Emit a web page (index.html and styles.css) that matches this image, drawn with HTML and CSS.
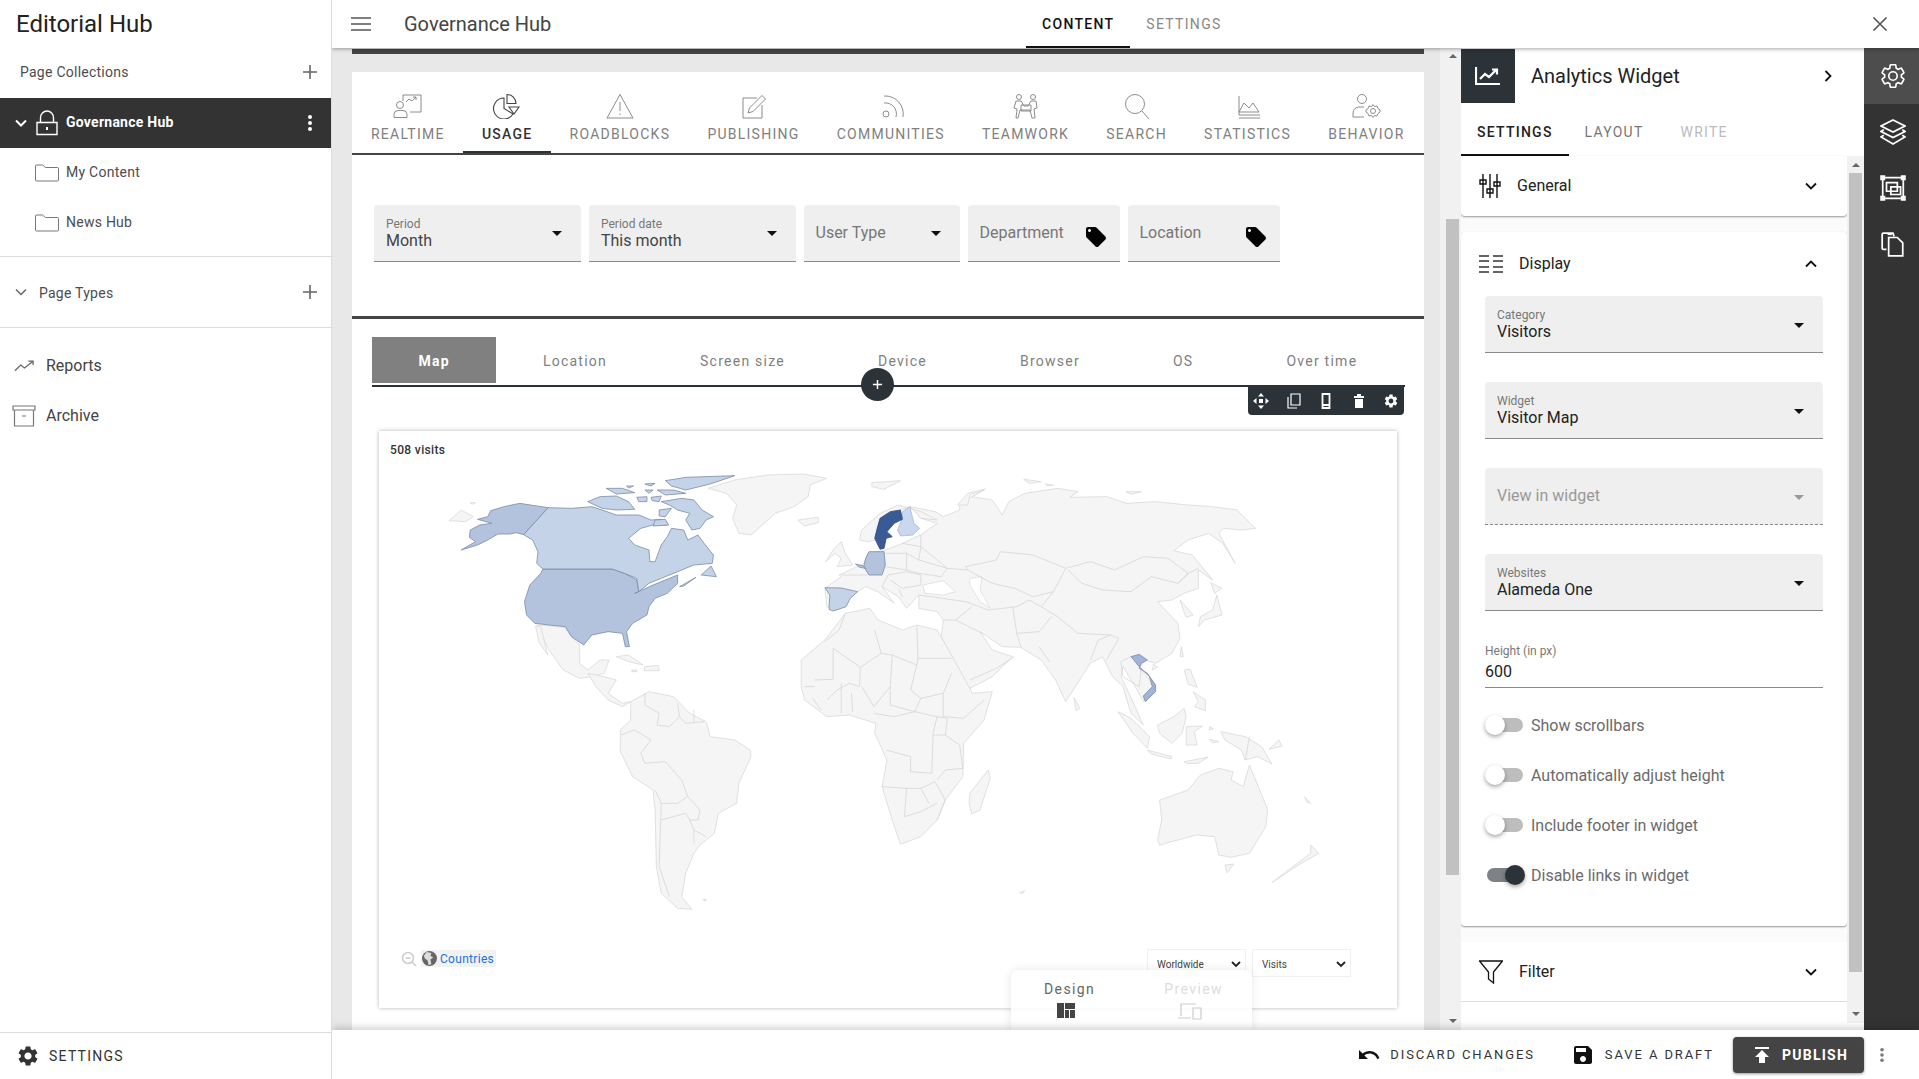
FILE: index.html
```html
<!DOCTYPE html>
<html lang="en">
<head>
<meta charset="utf-8">
<title>Governance Hub</title>
<link rel="stylesheet" href="styles.css">
</head>
<body>
<div class="app">
  <aside class="sidebar">
    <h1 class="brand">Editorial Hub</h1>
    <div class="side-head">
      <span>Page Collections</span>
      <svg class="plus" viewBox="0 0 16 16"><path d="M8 1v14M1 8h14"/></svg>
    </div>
    <div class="side-active">
      <svg class="chev-w" viewBox="0 0 12 8"><path d="M1 1.5l5 5 5-5"/></svg>
      <svg class="lock" viewBox="0 0 22 26"><path d="M1 12.500h20v12H1zM4.500 12.500V8a6.500 7 0 0 1 13 0v4.500"/><path class="lock-dot" d="M11 17v3"/></svg>
      <span class="side-active-label">Governance Hub</span>
      <svg class="kebab-w" viewBox="0 0 6 18"><circle cx="3" cy="3" r="2"/><circle cx="3" cy="9" r="2"/><circle cx="3" cy="15" r="2"/></svg>
    </div>
    <div class="side-item">
      <svg class="folder" viewBox="0 0 24 18"><path d="M.5 2a1 1 0 0 1 1-1h6l3 2.500h12a1 1 0 0 1 1 1V16a1 1 0 0 1-1 1h-21a1 1 0 0 1-1-1z"/></svg>
      <span>My Content</span>
    </div>
    <div class="side-item">
      <svg class="folder" viewBox="0 0 24 18"><path d="M.5 2a1 1 0 0 1 1-1h6l3 2.500h12a1 1 0 0 1 1 1V16a1 1 0 0 1-1 1h-21a1 1 0 0 1-1-1z"/></svg>
      <span>News Hub</span>
    </div>
    <div class="side-types">
      <svg class="chev-g" viewBox="0 0 12 8"><path d="M1 1.500l5 5 5-5"/></svg>
      <span>Page Types</span>
      <svg class="plus" viewBox="0 0 16 16"><path d="M8 1v14M1 8h14"/></svg>
    </div>
    <div class="side-link side-link-first">
      <svg class="trend" viewBox="0 0 22 12"><path d="M1 11l6-6 4 3 9-7M15 1h5v4"/></svg>
      <span>Reports</span>
    </div>
    <div class="side-link">
      <svg class="archive" viewBox="0 0 24 22"><path d="M1 1h22v4H1zM2.500 5v16h19V5M10 11h4"/></svg>
      <span>Archive</span>
    </div>
    <div class="side-foot">
      <svg class="foot-gear" viewBox="0 0 24 24"><path d="M19.140 12.940c.04-.3.06-.61.06-.94 0-.32-.02-.64-.07-.94l2.030-1.580c.18-.14.23-.41.12-.61l-1.920-3.320c-.12-.22-.37-.29-.59-.22l-2.390.96c-.5-.38-1.030-.7-1.620-.94l-.36-2.540c-.04-.24-.24-.41-.48-.41h-3.840c-.24 0-.43.17-.47.41l-.36 2.540c-.59.24-1.130.57-1.620.94l-2.390-.96c-.22-.08-.47 0-.59.22L2.740 8.870c-.12.21-.08.47.12.61l2.030 1.580c-.05.3-.09.63-.09.94s.02.64.07.94l-2.030 1.580c-.18.14-.23.41-.12.61l1.920 3.320c.12.22.37.29.59.22l2.390-.96c.5.38 1.030.7 1.620.94l.36 2.540c.05.24.24.41.48.41h3.840c.24 0 .44-.17.47-.41l.36-2.540c.59-.24 1.130-.56 1.620-.94l2.390.96c.22.08.47 0 .59-.22l1.920-3.320c.12-.22.07-.47-.12-.61l-2.010-1.580zM12 15.600c-1.980 0-3.600-1.620-3.600-3.600s1.620-3.600 3.600-3.600 3.600 1.620 3.600 3.600-1.620 3.600-3.600 3.600z"/></svg>
      <span>SETTINGS</span>
    </div>
  </aside>

  <div class="workspace">
    <header class="topbar">
      <svg class="burger" viewBox="0 0 20 14"><path d="M0 1h20M0 7h20M0 13h20"/></svg>
      <span class="top-title">Governance Hub</span>
      <nav class="top-tabs">
        <span class="top-tab top-tab-on">CONTENT</span>
        <span class="top-tab">SETTINGS</span>
      </nav>
      <svg class="close" viewBox="0 0 16 16"><path d="M1.500 1.500l13 13M14.500 1.500l-13 13"/></svg>
    </header>

    <div class="body">
      <main class="canvas">
        <div class="canvas-bar"></div>
        <section class="panel">
          <nav class="subtabs">
            <div class="subtab">
              <svg viewBox="0 0 30 26"><path d="M10 2h18v17H17M10 2v6"/><circle cx="7" cy="12" r="3.500"/><path d="M1 24.500v-3a4 4 0 0 1 4-4h5a4 4 0 0 1 4 4v3z"/><path d="M13 9l3-3 3 2 4-4M20 4h3v3"/></svg>
              <span>REALTIME</span>
            </div>
            <div class="subtab subtab-on">
              <svg viewBox="0 0 30 26"><path d="M12 5a10.500 10.500 0 1 0 9 16l-9-5.500z"/><path d="M15 1.500a9 9 0 0 1 9 9h-9z"/><path d="M17 14h10l-5 7z"/></svg>
              <span>USAGE</span>
            </div>
            <div class="subtab">
              <svg viewBox="0 0 30 26"><path d="M15 1.500L28 25H2zM15 9v9M15 20.500v1.500"/></svg>
              <span>ROADBLOCKS</span>
            </div>
            <div class="subtab">
              <svg viewBox="0 0 30 26"><path d="M19 5H5v20h19V12"/><path d="M10 20l1.500-5L24 2.500l3.500 3.500L15 18.500z"/></svg>
              <span>PUBLISHING</span>
            </div>
            <div class="subtab">
              <svg viewBox="0 0 30 26"><circle cx="10" cy="21" r="3"/><path d="M8 10a11 11 0 0 1 12 14M8 3a18 18 0 0 1 19 21"/></svg>
              <span>COMMUNITIES</span>
            </div>
            <div class="subtab">
              <svg viewBox="0 0 30 26"><circle cx="8" cy="4" r="2.500"/><circle cx="22" cy="4" r="2.500"/><path d="M5 8h5l3 5h4l3-5h5l1 7-3 1 1 9h-3l-2-8h-10l-2 8H5l1-9-3-1z"/><path d="M10 12h10v6H10z"/></svg>
              <span>TEAMWORK</span>
            </div>
            <div class="subtab">
              <svg viewBox="0 0 30 26"><circle cx="13" cy="11" r="9.500"/><path d="M20 18l7 8"/></svg>
              <span>SEARCH</span>
            </div>
            <div class="subtab">
              <svg viewBox="0 0 30 26"><path d="M6 3v19h21M6 25h21M6 19l5-9 5 5 4-5 6 9z"/></svg>
              <span>STATISTICS</span>
            </div>
            <div class="subtab">
              <svg viewBox="0 0 30 26"><circle cx="11" cy="6" r="4.500"/><path d="M2 24v-4a6 6 0 0 1 6-6h5"/><path d="M2 24h11"/><circle cx="22" cy="18" r="2.500"/><path d="M22 11.500l1.500 2 2.500-.5 1 2.500 2 1.500v2l-2 1.500-1 2.500-2.500-.5-1.500 2-1.500-2-2.500.5-1-2.500-2-1.500v-2l2-1.500 1-2.500 2.500.5z"/></svg>
              <span>BEHAVIOR</span>
            </div>
          </nav>

          <div class="filters">
            <div class="pfield pfield-1"><small>Period</small><b>Month</b><i class="caret"></i></div>
            <div class="pfield pfield-2"><small>Period date</small><b>This month</b><i class="caret"></i></div>
            <div class="pfield pfield-3 pfield-plain"><b>User Type</b><i class="caret"></i></div>
            <div class="pfield pfield-4 pfield-plain"><b>Department</b><svg class="tag" viewBox="0 0 24 24"><path d="M21.410 11.580l-9-9C12.050 2.220 11.550 2 11 2H4c-1.100 0-2 .9-2 2v7c0 .55.22 1.050.59 1.420l9 9c.36.36.86.58 1.410.58.55 0 1.050-.22 1.410-.59l7-7c.37-.36.59-.86.59-1.410 0-.55-.23-1.060-.59-1.420zM5.500 7C4.670 7 4 6.330 4 5.500S4.670 4 5.500 4 7 4.670 7 5.500 6.330 7 5.500 7z"/></svg></div>
            <div class="pfield pfield-4 pfield-plain"><b>Location</b><svg class="tag" viewBox="0 0 24 24"><path d="M21.410 11.580l-9-9C12.050 2.220 11.550 2 11 2H4c-1.100 0-2 .9-2 2v7c0 .55.22 1.050.59 1.420l9 9c.36.36.86.58 1.410.58.55 0 1.050-.22 1.410-.59l7-7c.37-.36.59-.86.59-1.410 0-.55-.23-1.060-.59-1.420zM5.500 7C4.670 7 4 6.330 4 5.500S4.670 4 5.500 4 7 4.670 7 5.500 6.330 7 5.500 7z"/></svg></div>
          </div>

          <div class="section-line"></div>

          <div class="widget">
            <div class="wtabs">
              <span class="wtab wtab-on">Map</span>
              <span class="wtab">Location</span>
              <span class="wtab">Screen size</span>
              <span class="wtab">Device</span>
              <span class="wtab">Browser</span>
              <span class="wtab">OS</span>
              <span class="wtab">Over time</span>
            </div>
            <span class="add-btn"><svg viewBox="0 0 12 12"><path d="M6 1v10M1 6h10"/></svg></span>
            <div class="toolbar">
              <svg viewBox="0 0 16 16"><path d="M8 0l3 3.500H5zM8 16l3-3.500H5zM0 8l3.500-3v6zM16 8l-3.500-3v6z"/><path d="M6 6h4v4H6z"/></svg>
              <svg viewBox="0 0 16 16" class="tb-line"><path d="M5 1h9v11H5zM2 4v11h9"/></svg>
              <svg viewBox="0 0 16 16" class="tb-line tb-thick"><path d="M4.500 1h7v14h-7zM4.500 12h7"/></svg>
              <svg viewBox="0 0 16 16"><path d="M3 3h10v2H3zM6 1h4v2H6zM4 6h8v9H4z"/></svg>
              <svg viewBox="0 0 24 24"><path d="M19.140 12.940c.04-.3.06-.61.06-.94 0-.32-.02-.64-.07-.94l2.030-1.580c.18-.14.23-.41.12-.61l-1.920-3.320c-.12-.22-.37-.29-.59-.22l-2.390.96c-.5-.38-1.030-.7-1.620-.94l-.36-2.540c-.04-.24-.24-.41-.48-.41h-3.840c-.24 0-.43.17-.47.41l-.36 2.540c-.59.24-1.130.57-1.620.94l-2.390-.96c-.22-.08-.47 0-.59.22L2.740 8.870c-.12.21-.08.47.12.61l2.030 1.580c-.05.3-.09.63-.09.94s.02.64.07.94l-2.030 1.580c-.18.14-.23.41-.12.61l1.920 3.320c.12.22.37.29.59.22l2.390-.96c.5.38 1.030.7 1.620.94l.36 2.540c.05.24.24.41.48.41h3.840c.24 0 .44-.17.47-.41l.36-2.540c.59-.24 1.130-.56 1.620-.94l2.390.96c.22.08.47 0 .59-.22l1.920-3.320c.12-.22.07-.47-.12-.61l-2.010-1.580zM12 15.600c-1.980 0-3.600-1.620-3.600-3.600s1.620-3.600 3.600-3.600 3.600 1.620 3.600 3.600-1.620 3.600-3.600 3.600z"/></svg>
            </div>

            <div class="map-card">
              <svg class="map" viewBox="-51.450 -87 2494 1731" preserveAspectRatio="none">
                <g class="land">
                  <path d="M120,182 L150,150 L180,170 L160,185 Z"/>
                  <path d="M172,128 L185,128 L178,133 Z"/>
                  <path d="M755,85 L820,60 L900,45 L990,42 L1045,55 L1005,75 L1000,110 L965,140 L920,160 L860,225 L830,220 L815,175 L825,135 L800,100 Z"/>
                  <path d="M975,180 L1025,172 L1025,188 L990,198 Z"/>
                  <path d="M335,495 L365,497 L405,503 L420,530 L440,555 L440,610 L460,630 L490,600 L512,600 L500,640 L470,650 L440,655 L400,630 L365,570 Z"/>
                  <path d="M332,498 L345,500 L362,585 L340,545 Z"/>
                  <path d="M460,640 L500,650 L530,660 L510,700 L545,730 L565,725 L545,740 L510,720 L480,680 Z"/>
                  <path d="M530,590 L560,585 L595,615 L560,605 Z"/>
                  <path d="M600,620 L632,616 L635,632 L598,632 Z"/>
                  <path d="M568,630 L580,630 L580,635 L568,635 Z"/>
                  <path d="M565,725 L610,695 L670,710 L710,760 L750,785 L760,830 L820,840 L858,870 L860,890 L830,970 L825,1030 L780,1060 L770,1120 L735,1155 L720,1180 L700,1240 L690,1310 L715,1348 L680,1345 L640,1300 L628,1220 L625,1050 L620,990 L570,950 L540,875 L540,810 L565,780 Z"/>
                  <path class="border" d="M600,700 L600,735 L635,760 L630,795 L660,800 L685,770 L680,730 M685,770 L700,790 L745,785 M720,750 L720,785 M540,825 L575,810 L615,840 L590,880 L600,910 L650,905 L690,960 L705,1010 L680,1030 L640,1030 L625,990 M705,1010 L735,1050 L730,1080 L710,1080 L720,1110 L720,1150 M640,1030 L635,1220 L660,1310 M640,1080 L700,1060 L710,1080 M720,1110 L750,1130"/>
                  <path d="M742,1318 L750,1318 L748,1324 Z"/>
                  <path d="M1518,1298 L1530,1292 L1526,1300 Z"/>
                </g>
                <g class="alt-world land">
                  <path d="M52,600 L110,540 L160,460 L220,445 L240,480 L300,510 L335,495 L385,510 L395,530 L465,680 L470,700 L520,695 L500,780 L450,850 L448,950 L405,1020 L385,1080 L345,1130 L295,1153 L275,1080 L250,980 L262,900 L232,820 L235,790 L170,765 L115,770 L60,720 L52,680 Z"/>
                  <path class="border" d="M130,565 L130,658 L85,660 M130,565 L197,622 L248,580 L275,585 L335,615 L338,595 L335,500 M232,510 L248,580 M160,460 L145,510 L110,545 M197,622 L195,680 L170,670 L140,690 L115,720 M275,585 L270,680 L230,740 L200,680 M338,595 L420,595 M335,615 L320,690 L345,715 L400,700 L420,640 M270,680 L270,735 L330,755 L345,715 M400,700 L400,770 L450,775 L500,720 M230,760 L280,770 L330,755 L385,770 L375,820 L372,940 L320,935 L320,890 L260,870 M385,770 L410,775 L405,825 L375,825 M405,825 L440,855 L448,925 L405,930 L385,960 M250,980 L310,985 L345,985 L380,965 L405,1020 L385,1080 M310,985 L305,1070 L345,1055 L385,1030 M345,985 L365,1030 M150,670 L150,760 M175,700 L178,755 M60,680 L85,680 M80,715 L100,750"/>
                  <path d="M465,1000 L510,930 L515,955 L490,1050 L470,1062 L463,1030 Z"/>
                  <path d="M110,385 L150,350 L145,345 L185,322 L205,310 L215,280 L255,272 L300,250 L330,232 L345,225 L385,190 L345,175 L320,140 L380,155 L400,170 L440,150 L440,130 L500,90 L470,110 L520,120 L545,165 L560,125 L600,100 L680,85 L730,95 L710,112 L800,110 L850,130 L920,125 L1000,135 L1060,140 L1120,150 L1165,205 L1130,210 L1085,205 L1075,220 L1115,310 L1085,250 L1050,220 L1000,240 L965,272 L1010,285 L1060,360 L1025,330 L1025,385 L990,400 L960,420 L925,425 L975,490 L980,535 L960,580 L920,610 L895,600 L880,625 L920,680 L890,725 L875,690 L840,620 L835,650 L855,700 L890,795 L860,760 L840,680 L815,650 L790,590 L760,610 L700,725 L675,660 L640,600 L590,562 L545,560 L520,540 L490,515 L520,570 L570,590 L520,650 L465,685 L395,530 L400,480 L385,455 L340,445 L340,405 L310,445 L290,410 L250,380 L280,430 L240,395 L210,380 L190,395 L135,452 L115,440 Z"/>
                  <path class="water" d="M350,375 L400,362 L430,395 L400,405 L355,400 Z"/>
                  <path class="water" d="M465,355 L495,350 L490,390 L515,445 L490,425 L465,375 Z"/>
                  <path d="M195,240 L200,210 L245,160 L290,135 L345,155 L385,180 L345,175 L320,140 L295,150 L245,180 L235,240 L215,245 Z"/>
                  <path d="M112,305 L130,270 L150,245 L160,280 L178,315 L140,320 L150,295 L135,280 Z"/>
                  <path d="M225,68 L295,62 L255,88 L225,80 Z"/>
                  <path d="M597,58 L640,65 L610,70 Z"/>
                  <path d="M650,72 L670,76 L655,78 Z"/>
                  <path d="M848,95 L885,95 L860,103 Z"/>
                  <path d="M435,135 L460,100 L503,87 L465,105 L460,135 Z"/>
                  <path d="M1055,368 L1082,385 L1065,400 Z"/>
                  <path d="M1025,500 L1030,470 L1060,450 L1070,405 L1083,465 L1040,480 Z"/>
                  <path d="M980,420 L1012,465 L995,472 L985,440 Z"/>
                  <path d="M983,560 L988,590 L980,590 Z"/>
                  <path d="M915,612 L925,622 L912,630 Z"/>
                  <path d="M990,630 L1005,628 L1022,682 L1000,672 Z"/>
                  <path d="M1012,695 L1042,720 L1042,752 L1015,740 L1025,725 Z"/>
                  <path d="M720,712 L735,745 L725,752 Z"/>
                  <path d="M828,755 L860,775 L905,830 L900,865 L865,820 Z"/>
                  <path d="M900,870 L960,890 L958,897 L910,882 Z"/>
                  <path d="M925,795 L965,770 L990,745 L995,770 L985,820 L960,850 L930,820 Z"/>
                  <path d="M995,800 L1035,798 L1015,815 L1022,855 L995,855 Z"/>
                  <path d="M1052,838 L1075,845 L1060,848 Z"/>
                  <path d="M990,905 L1048,892 L1025,910 L995,910 Z"/>
                  <path d="M1052,800 L1062,806 L1052,810 Z"/>
                  <path d="M1080,815 L1140,830 L1180,860 L1205,912 L1170,890 L1140,900 L1130,870 L1090,840 Z"/>
                  <path d="M1198,868 L1222,840 L1230,858 Z"/>
                  <path d="M1285,1010 L1300,1030 L1290,1025 Z"/>
                  <path d="M930,1020 L1000,990 L1030,945 L1075,925 L1110,935 L1105,960 L1135,980 L1150,915 L1195,1050 L1190,1100 L1150,1180 L1105,1192 L1075,1185 L1065,1130 L1020,1125 L930,1155 L925,1140 L935,1080 Z"/>
                  <path d="M1090,1215 L1112,1212 L1095,1238 Z"/>
                  <path d="M1300,1155 L1320,1180 L1270,1215 L1205,1268 L1240,1235 L1300,1180 Z"/>
                  <path class="border" d="M258,280 L310,280 L310,330 L258,320 M310,280 L340,300 L410,325 L395,350 L340,340 L310,330 M300,250 L345,260 L340,300 M265,345 L310,335 L345,345 L345,375 L300,385 L270,360 M290,385 L300,410 M345,225 L345,260 L410,325 M410,325 L460,330 L455,320 L530,300 L540,275 L620,285 L700,325 M700,325 L670,395 L620,410 L575,385 L520,370 L490,350 L460,330 M700,325 L760,305 L820,330 L890,290 L950,295 L1000,340 L975,370 L910,350 L860,395 L790,390 L740,370 L705,330 M670,395 L640,440 L680,470 L730,520 L810,525 M340,405 L455,425 L510,450 L580,440 L610,420 L640,440 M570,440 L580,520 L590,560 M580,520 L635,515 L665,470 M635,560 L660,605 M400,480 L430,480 L495,520 M430,480 L470,440 M465,660 L530,625 L575,590 M810,525 L830,535 L800,600 M810,525 L780,540 L760,600 M860,590 L835,605 L840,650 L880,680 L885,625 M975,370 L1000,340 L1025,325 M150,345 L215,345 M250,380 L265,345 M1150,830 L1140,900"/>
                </g>
                <g class="vis-b">
                  <path d="M222,152 L255,140 L293,130 L363,143 L303,224 L285,218 L270,222 L240,222 L215,240 L190,255 L150,270 L185,245 L170,232 L172,210 L195,195 L225,190 L190,178 L215,170 Z"/>
                  <path d="M350,327 L520,327 L550,340 L580,360 L585,395 L575,400 L620,375 L680,345 L680,370 L655,400 L625,415 L610,440 L605,465 L570,490 L555,515 L562,560 L552,560 L545,520 L510,515 L470,525 L450,555 L420,530 L405,500 L365,495 L330,490 L310,465 L305,425 L318,375 L345,340 Z"/>
                </g>
                <g class="vis-a">
                  <path d="M363,143 L420,145 L470,140 L495,150 L530,165 L585,165 L615,180 L640,178 L655,195 L620,195 L590,205 L560,235 L575,255 L610,270 L612,305 L625,305 L640,255 L655,230 L665,205 L695,210 L705,240 L730,225 L745,250 L768,285 L765,310 L720,315 L680,335 L640,355 L610,370 L585,395 L580,355 L550,340 L520,327 L350,327 L335,310 L338,275 L325,240 L303,224 Z"/>
                  <path d="M640,125 L690,115 L720,120 L740,150 L768,170 L750,180 L735,205 L715,210 L700,180 L710,160 L680,150 L660,135 Z"/>
                  <path d="M490,110 L530,108 L560,125 L575,148 L530,150 L495,145 L460,125 Z"/>
                  <path d="M650,62 L700,52 L820,47 L760,72 L700,90 L665,78 Z"/>
                  <path d="M738,345 L762,318 L775,350 Z"/>
                  <path d="M685,380 L725,352 L695,378 Z"/>
                  <path d="M580,112 L605,110 L605,125 L585,125 Z"/>
                  <path d="M615,112 L640,108 L635,125 L618,122 Z"/>
                  <path d="M635,150 L665,145 L650,170 L635,168 Z"/>
                  <path d="M505,85 L545,85 L575,98 L530,102 Z"/>
                  <path d="M600,72 L625,70 L615,78 Z"/>
                  <path d="M625,180 L650,178 L658,195 L620,198 Z"/>
                  <path d="M600,90 L620,90 L610,100 Z"/>
                  <path d="M630,90 L670,90 L700,100 L650,105 Z"/>
                  <path d="M555,78 L572,78 L560,84 Z"/>
                </g>
                <g class="alt-world">
                  <path class="vis-a" d="M110,383 L150,384 L190,395 L172,415 L162,440 L130,453 L120,448 L122,405 Z"/>
                  <path class="vis-b" d="M218,275 L255,275 L258,315 L250,345 L218,345 L205,320 L210,295 Z"/>
                  <path class="vis-b" d="M185,312 L205,318 L210,325 L195,322 Z"/>
                  <path class="vis-f" d="M318,140 L328,190 L342,205 L325,225 L295,228 L288,210 L298,180 L300,155 Z"/>
                  <path class="vis-s" d="M245,175 L270,155 L295,150 L300,178 L280,190 L262,215 L275,230 L260,235 L255,265 L245,268 L232,235 L238,205 Z"/>
                  <path class="vis-v" d="M860,590 L880,583 L900,600 L885,610 L880,625 L900,640 L920,675 L920,695 L895,725 L890,708 L912,680 L905,650 L880,620 Z"/>
                </g>
              </svg>
              <span class="visits">508 visits</span>
              <div class="map-legend">
                <svg class="zoom-out" viewBox="0 0 16 16"><circle cx="7" cy="7" r="5.500"/><path d="M4.500 7h5M11 11l4 4"/></svg>
                <span class="countries"><svg class="globe" viewBox="0 0 16 16"><circle cx="8" cy="8" r="8"/><path class="globe-land" d="M5 1l5 1-1 3 3 2-3 2 1 5-3 1-1-5-3-2-1-3z"/></svg><span>Countries</span></span>
              </div>
              <div class="map-selects">
                <div class="mselect"><span>Worldwide</span><svg viewBox="0 0 10 7"><path d="M1 1l4 4 4-4"/></svg></div>
                <div class="mselect"><span>Visits</span><svg viewBox="0 0 10 7"><path d="M1 1l4 4 4-4"/></svg></div>
              </div>
            </div>
          </div>
        </section>
        <div class="mode-switch">
          <div class="mode">
            <span>Design</span>
            <svg class="mode-fill" viewBox="0 0 18 15"><path d="M0 0h7v15H0zM8 0h10v6H8zM8 7h4v8H8zM13 7h5v8h-5z"/></svg>
          </div>
          <div class="mode mode-off">
            <span>Preview</span>
            <svg class="mode-line" viewBox="0 0 24 17"><path d="M3 13V1h15M0 15h13M15 5h8v11h-8z"/></svg>
          </div>
        </div>
      </main>

      <div class="scroll scroll-page">
        <i class="arrow-up"></i>
        <i class="thumb thumb-page"></i>
        <i class="arrow-down"></i>
      </div>

      <aside class="inspector">
        <div class="ins-head">
          <span class="ins-icon"><svg viewBox="0 0 26 20"><path d="M1 1v17h24" class="ins-axis"/><path d="M5 13l5-5 4 3 7-7M17 3.500h5v5" class="ins-axis"/></svg></span>
          <span class="ins-title">Analytics Widget</span>
          <svg class="ins-next" viewBox="0 0 8 12"><path d="M1.500 1l5 5-5 5"/></svg>
        </div>
        <nav class="ins-tabs">
          <span class="ins-tab ins-tab-on">SETTINGS</span>
          <span class="ins-tab">LAYOUT</span>
          <span class="ins-tab ins-tab-off">WRITE</span>
        </nav>
        <div class="ins-body">
          <div class="ins-scrollarea">
            <section class="acc acc-general">
              <div class="acc-head">
                <svg class="acc-ic acc-ic-gen" viewBox="0 0 22 24"><path d="M4 0v24M11 0v24M18 0v24M1 6h6v4H1zM8 15h6v4H8zM15 8h6v4h-6z"/></svg>
                <span>General</span>
                <svg class="acc-chev" viewBox="0 0 12 8"><path d="M1 1.500l5 5 5-5"/></svg>
              </div>
            </section>
            <section class="acc acc-display">
              <div class="acc-head acc-head-tall">
                <svg class="acc-ic acc-ic-dis" viewBox="0 0 24 20"><path d="M0 2h10M14 2h10M0 7h10M14 7h10M0 13h10M14 13h10M0 18h10M14 18h10"/></svg>
                <span>Display</span>
                <svg class="acc-chev" viewBox="0 0 12 8"><path d="M1 6.500l5-5 5 5"/></svg>
              </div>
              <div class="ifield"><small>Category</small><b>Visitors</b><i class="caret"></i></div>
              <div class="ifield"><small>Widget</small><b>Visitor Map</b><i class="caret"></i></div>
              <div class="ifield ifield-off"><b>View in widget</b><i class="caret"></i></div>
              <div class="ifield"><small>Websites</small><b>Alameda One</b><i class="caret"></i></div>
              <div class="itext"><small>Height (in px)</small><b>600</b></div>
              <div class="toggles">
                <label class="toggle"><i class="track"></i><span>Show scrollbars</span></label>
                <label class="toggle"><i class="track"></i><span>Automatically adjust height</span></label>
                <label class="toggle"><i class="track"></i><span>Include footer in widget</span></label>
                <label class="toggle toggle-on"><i class="track"></i><span>Disable links in widget</span></label>
              </div>
            </section>
            <section class="acc acc-filter">
              <div class="acc-head">
                <svg class="acc-ic acc-ic-fil" viewBox="0 0 24 24"><path d="M.5 1h23l-9 11v11l-5-4v-7z"/></svg>
                <span>Filter</span>
                <svg class="acc-chev" viewBox="0 0 12 8"><path d="M1 1.500l5 5 5-5"/></svg>
              </div>
            </section>
          </div>
          <div class="scroll scroll-ins">
            <i class="arrow-up"></i>
            <i class="thumb thumb-ins"></i>
            <i class="arrow-down"></i>
          </div>
        </div>
      </aside>

      <nav class="rail">
        <span class="rail-item rail-on"><svg class="rail-gear" viewBox="0 0 24 24"><path d="M19.140 12.940c.04-.3.06-.61.06-.94 0-.32-.02-.64-.07-.94l2.030-1.580c.18-.14.23-.41.12-.61l-1.920-3.320c-.12-.22-.37-.29-.59-.22l-2.390.96c-.5-.38-1.030-.7-1.620-.94l-.36-2.540c-.04-.24-.24-.41-.48-.41h-3.840c-.24 0-.43.17-.47.41l-.36 2.540c-.59.24-1.130.57-1.620.94l-2.390-.96c-.22-.08-.47 0-.59.22L2.740 8.870c-.12.21-.08.47.12.61l2.030 1.580c-.05.3-.09.63-.09.94s.02.64.07.94l-2.030 1.580c-.18.14-.23.41-.12.61l1.920 3.320c.12.22.37.29.59.22l2.390-.96c.5.38 1.030.7 1.620.94l.36 2.540c.05.24.24.41.48.41h3.840c.24 0 .44-.17.47-.41l.36-2.540c.59-.24 1.130-.56 1.620-.94l2.390.96c.22.08.47 0 .59-.22l1.920-3.320c.12-.22.07-.47-.12-.61l-2.010-1.580zM12 15.600c-1.980 0-3.600-1.620-3.600-3.600s1.620-3.600 3.600-3.600 3.600 1.620 3.600 3.600-1.620 3.600-3.600 3.600z"/></svg></span>
        <span class="rail-item"><svg viewBox="0 0 24 24"><path d="M12 1l11 5.500-11 5.500L1 6.500zM3.500 10L1 11.500 12 17l11-5.500-2.500-1.500M3.500 15L1 16.500 12 23l11-6.500-2.500-1.500"/></svg></span>
        <span class="rail-item"><svg viewBox="0 0 24 24"><path d="M2.500 2.500h19v19h-19zM6 7h10v8H6zM10 11h9v7h-9z"/><path d="M1 1h3v3H1zM20 1h3v3h-3zM1 20h3v3H1zM20 20h3v3h-3z"/></svg></span>
        <span class="rail-item"><svg viewBox="0 0 24 24"><path d="M6 17H3a1 1 0 0 1-1-1V3a1 1 0 0 1 1-1h9l1 3"/><path d="M8 6h8l5 5v12H8z"/><path d="M7 3h4"/></svg></span>
      </nav>
    </div>

    <footer class="bottombar">
      <span class="act"><svg class="act-ic act-undo" viewBox="0 0 24 24"><path d="M12.500 8c-2.650 0-5.050.99-6.900 2.600L2 7v9h9l-3.620-3.620c1.390-1.160 3.160-1.880 5.120-1.880 3.540 0 6.550 2.310 7.600 5.500l2.370-.78C21.080 11.030 17.150 8 12.500 8z"/></svg>DISCARD CHANGES</span>
      <span class="act"><svg class="act-ic act-save" viewBox="3 3 18 18"><path d="M17 3H5c-1.110 0-2 .9-2 2v14c0 1.100.89 2 2 2h14c1.100 0 2-.9 2-2V7l-4-4zm-5 16c-1.660 0-3-1.340-3-3s1.340-3 3-3 3 1.340 3 3-1.340 3-3 3zm3-10H5V5h10v4z"/></svg>SAVE A DRAFT</span>
      <span class="publish"><svg viewBox="5 4 14 16"><path d="M5 4v2h14V4H5zm0 10h4v6h6v-6h4l-7-7-7 7z"/></svg>PUBLISH</span>
      <svg class="kebab-g" viewBox="0 0 6 18"><circle cx="3" cy="3" r="2"/><circle cx="3" cy="9" r="2"/><circle cx="3" cy="15" r="2"/></svg>
    </footer>
  </div>
</div>
</body>
</html>
```

FILE: styles.css
```css
* { box-sizing: border-box; }
html, body { margin: 0; height: 100%; overflow: hidden; }
body { font-family: Roboto, "Liberation Sans", sans-serif; color: #222; background: #fff; }
svg { display: block; flex: none; }
i { font-style: normal; }
b { font-weight: 400; }
small { font-size: 12px; }

.app { display: grid; grid-template-columns: 332px 1fr; height: 1079px; }

/* sidebar */
.sidebar { display: flex; flex-direction: column; background: #fff; border-right: 1px solid #ddd; position: relative; z-index: 3; letter-spacing: .25px; }
.brand { margin: 0; padding: 10px 0 0 16px; height: 48px; font-size: 24px; line-height: 28px; font-weight: 400; color: #222; letter-spacing: 0; }
.side-head { height: 50px; display: flex; align-items: center; justify-content: space-between; padding: 0 13px 2px 20px; font-size: 14px; color: #4d4d4d; }
.plus { width: 16px; height: 16px; fill: none; stroke: #666; stroke-width: 1.6; }
.side-active { height: 50px; background: #333; color: #fff; display: flex; align-items: center; padding-left: 15px; font-size: 14px; font-weight: 700; }
.side-active-label { flex: 1; padding-bottom: 2px; }
.chev-w { width: 12px; height: 8px; fill: none; stroke: #fff; stroke-width: 2; margin-right: 9px; }
.lock { width: 22px; height: 26px; fill: none; stroke: #fff; stroke-width: 1.4; margin-right: 8px; }
.lock-dot { stroke-width: 2; }
.kebab-w { width: 6px; height: 18px; fill: #fff; margin-right: 18px; }
.side-item { height: 50px; display: flex; align-items: center; padding-left: 35px; font-size: 14px; color: #4d4d4d; gap: 7px; }
.side-item span { padding-bottom: 2px; }
.folder { width: 24px; height: 18px; fill: none; stroke: #777; stroke-width: 1; }
.side-types { margin-top: 8px; height: 72px; border-top: 1px solid #ddd; border-bottom: 1px solid #ddd; display: flex; align-items: center; padding: 0 13px 0 15px; font-size: 14px; color: #4d4d4d; }
.side-types span { flex: 1; margin-left: 12px; padding-top: 2px; }
.chev-g { width: 12px; height: 8px; fill: none; stroke: #666; stroke-width: 1.5; }
.side-link { height: 50px; display: flex; align-items: center; font-size: 16px; color: #444; padding: 0 0 2px 46px; position: relative; letter-spacing: 0; }
.side-link-first { margin-top: 13px; }
.trend { position: absolute; left: 14px; top: 19px; width: 21px; height: 12px; fill: none; stroke: #666; stroke-width: 1.3; }
.archive { position: absolute; left: 12px; top: 14px; width: 24px; height: 22px; fill: none; stroke: #777; stroke-width: 1.2; }
.side-foot { margin-top: auto; height: 47px; border-top: 1px solid #ddd; display: flex; align-items: center; padding-left: 16px; gap: 9px; font-size: 14px; letter-spacing: 1.25px; color: #333; }
.foot-gear { width: 24px; height: 24px; fill: #333; }

/* workspace */
.workspace { display: flex; flex-direction: column; min-width: 0; height: 1079px; }
.topbar { height: 48px; flex: none; position: relative; z-index: 2; background: #fff; display: flex; align-items: center; box-shadow: 0 1px 4px rgba(0,0,0,.35); padding-left: 19px; }
.burger { width: 20px; height: 14px; fill: none; stroke: #555; stroke-width: 1.6; }
.top-title { margin-left: 33px; font-size: 20px; color: #444; width: 622px; }
.top-tabs { display: flex; height: 48px; }
.top-tab { padding: 0 16px; line-height: 48px; font-size: 14px; letter-spacing: 1.3px; font-weight: 400; color: #888; }
.top-tab-on { color: #111; font-weight: 500; border-bottom: 2px solid #111; }
.close { width: 16px; height: 16px; fill: none; stroke: #555; stroke-width: 1.6; position: absolute; left: 1540px; top: 16px; }

.body { flex: 1; min-height: 0; display: flex; }

/* canvas */
.canvas { width: 1108px; flex: none; background: #e8e8e8; padding: 1px 16px 0 20px; display: flex; flex-direction: column; position: relative; overflow: hidden; }
.canvas-bar { height: 5px; flex: none; background: #444; }
.panel { margin-top: 18px; flex: 1; min-height: 0; background: #fff; overflow: hidden; }
.subtabs { height: 83px; display: flex; padding-left: .4px; border-bottom: 2px solid #444; }
.subtab { padding: 21px 18.600px 0; height: 81px; display: flex; flex-direction: column; align-items: center; color: #808080; font-size: 14px; letter-spacing: 1.25px; white-space: nowrap; }
.subtab svg { width: 30px; height: 26px; fill: none; stroke: #808080; stroke-width: .9; margin-bottom: 7px; }
.subtab span { line-height: 16px; }
.subtab-on { color: #333; border-bottom: 2px solid #2c3338; font-weight: 500; }
.subtab-on svg { stroke: #444; stroke-width: 1.1; }

.filters { padding: 50px 0 0 22px; display: flex; gap: 8px; }
.pfield { position: relative; height: 57px; background: #efefef; border-bottom: 1px solid #8a8a8a; border-radius: 4px 4px 0 0; padding: 12px 12px 0; display: flex; flex-direction: column; }
.pfield small { line-height: 15px; color: #777; }
.pfield b { font-size: 16px; line-height: 18px; color: #444; }
.pfield-plain b { color: #777; margin-top: 7px; }
.pfield-1 { width: 207px; }
.pfield-2 { width: 206.500px; }
.pfield-3 { width: 156px; }
.pfield-4 { width: 152px; }
.caret { position: absolute; right: 19px; top: 26px; width: 0; height: 0; border-left: 5px solid transparent; border-right: 5px solid transparent; border-top: 5px solid #111; }
.tag { position: absolute; right: 12px; top: 20px; width: 24px; height: 24px; fill: #000; }

.section-line { margin-top: 54px; height: 3px; background: #444; }
.widget { position: relative; padding: 18px 19px 0 20px; }
.wtabs { display: flex; height: 50px; padding-bottom: 2px; border-bottom: 2px solid #2c3338; align-items: flex-start; }
.wtab { height: 46px; line-height: 48px; padding: 0 46.500px; font-size: 14px; letter-spacing: 1.25px; color: #7f7f7f; white-space: nowrap; }
.wtab-on { background: #808080; color: #fff; font-weight: 700; }
.add-btn { position: absolute; left: 509px; top: 49px; width: 33px; height: 33px; border-radius: 50%; background: #2c3338; display: flex; align-items: center; justify-content: center; }
.add-btn svg { width: 11px; height: 11px; fill: none; stroke: #fff; stroke-width: 1.6; }
.toolbar { position: absolute; right: 20px; top: 68px; width: 156px; height: 28px; background: #2c3338; border-radius: 0 0 4px 4px; display: flex; align-items: center; justify-content: space-between; padding: 0 5px 0 5px; z-index: 1; }
.toolbar svg { width: 16px; height: 16px; fill: #fff; }
.toolbar .tb-line { fill: none; stroke: #fff; stroke-width: 1.2; }
.toolbar .tb-thick { stroke-width: 1.8; }

.map-card { position: relative; margin: 44px 0 0 7px; width: 1018px; height: 577px; background: #fff; box-shadow: 0 0 4px rgba(0,0,0,.3); }
.map { width: 1018px; height: 577px; }
.map path { vector-effect: non-scaling-stroke; stroke-linejoin: round; }
.land path { fill: #f5f5f5; stroke: #d9d9d9; stroke-width: .8px; }
.land path.border { fill: none; stroke: #d6d6d6; }
.land path.water { fill: #fff; stroke: #ddd; }
.alt-world { transform: translate(931px, 0); }
.vis-a path, path.vis-a { fill: #c5d3e9; stroke: #7b8ba6; stroke-width: .8px; }
.vis-b path, path.vis-b { fill: #b3c3de; stroke: #7b8ba6; stroke-width: .8px; }
path.vis-f { fill: #c9d7ef; stroke: #a9b8d2; stroke-width: .8px; }
path.vis-s { fill: #3a5a96; stroke: #2e4a80; stroke-width: .8px; }
path.vis-v { fill: #a0b3d8; stroke: #7b8ba6; stroke-width: .8px; }
.visits { position: absolute; left: 11px; top: 12px; font-size: 12px; font-weight: 500; letter-spacing: .35px; line-height: 14px; color: #333; }
.map-legend { position: absolute; left: 22px; top: 519px; display: flex; align-items: center; gap: 4px; }
.zoom-out { width: 16px; height: 16px; fill: none; stroke: #ccc; stroke-width: 1.5; }
.countries { display: flex; align-items: center; gap: 3px; padding-right: 2px; height: 17px; background: #f2f2f2; font-size: 12px; letter-spacing: .3px; color: #1b73d6; }
.globe { width: 15px; height: 15px; fill: #666; margin-left: 1px; }
.globe-land { fill: #ddd; }
.map-selects { position: absolute; left: 768px; top: 518px; display: flex; gap: 6px; }
.mselect { height: 28px; width: 99px; border: 1px solid #f0f0f0; background: #fff; display: flex; align-items: center; justify-content: space-between; padding: 3px 3px 0 9px; font-size: 10px; color: #444; }
.mselect svg { width: 10px; height: 7px; fill: none; stroke: #222; stroke-width: 1.8; margin-right: 1px; }

.mode-switch { position: absolute; left: 679px; bottom: 0; width: 241px; height: 60px; background: rgba(255,255,255,.85); border-radius: 8px 8px 0 0; box-shadow: 0 0 10px rgba(0,0,0,.1); display: flex; justify-content: space-between; padding: 0 29px 0 33px; }
.mode { display: flex; flex-direction: column; align-items: center; padding-top: 10px; font-size: 14px; letter-spacing: 1.4px; color: #666; }
.mode span { line-height: 18px; }
.mode .mode-fill { width: 18px; height: 15px; fill: #444; margin: 5px 8px 0 0; }
.mode-off { color: #ddd; }
.mode-off .mode-line { width: 24px; height: 17px; fill: none; stroke: #ccc; stroke-width: 1.2; margin: 5px 8px 0 0; }

/* scrollbars */
.scroll { background: #f1f1f1; display: flex; flex-direction: column; position: relative; flex: none; }
.arrow-up, .arrow-down { display: block; width: 0; height: 0; border-left: 4px solid transparent; border-right: 4px solid transparent; }
.arrow-up { border-bottom: 4px solid #666; }
.arrow-down { border-top: 4px solid #666; margin-top: auto; }
.thumb { display: block; background: #c1c1c1; width: 13px; }
.scroll-page { width: 21px; }
.scroll-page .arrow-up { margin: 6px 0 0 9px; }
.scroll-page .arrow-down { margin-left: 9px; margin-bottom: 7px; }
.thumb-page { margin: 161px 0 0 6px; height: 656px; }
.scroll-ins { width: 17px; height: 867px; }
.scroll-ins .arrow-up { margin: 7px 0 0 5px; }
.scroll-ins .arrow-down { margin-left: 5px; margin-bottom: 7px; }
.thumb-ins { margin: 6px 0 0 2px; height: 799px; }

/* inspector */
.inspector { width: 403px; flex: none; background: #fff; display: flex; flex-direction: column; min-height: 0; }
.ins-head { height: 55px; flex: none; display: flex; align-items: center; }
.ins-icon { margin-top: 1px; width: 54px; height: 54px; background: #2c3338; display: flex; align-items: center; justify-content: center; }
.ins-icon svg { width: 26px; height: 20px; }
.ins-axis { fill: none; stroke: #fff; stroke-width: 2.2; }
.ins-title { margin-left: 16px; flex: 1; font-size: 20px; color: #222; }
.ins-next { width: 8px; height: 12px; fill: none; stroke: #111; stroke-width: 1.8; margin-right: 32px; }
.ins-tabs { height: 53px; flex: none; display: flex; }
.ins-tab { padding: 0 16px; line-height: 58px; height: 53px; font-size: 14px; font-weight: 400; letter-spacing: 1.25px; color: #777; }
.ins-tab-on { color: #222; font-weight: 500; border-bottom: 2px solid #111; }
.ins-tab-off { color: #bbb; padding-left: 21px; }
.ins-body { flex: 1; min-height: 0; display: flex; background: #fff; }
.ins-scrollarea { width: 386px; flex: none; background: #fbfbfb; }
.acc { background: #fff; }
.acc-general { height: 60px; border-radius: 0 0 4px 4px; box-shadow: 0 1px 2px rgba(0,0,0,.4); }
.acc-display { margin-top: 16px; height: 694px; border-radius: 4px; box-shadow: 0 1px 2px rgba(0,0,0,.4); padding: 0 24px; }
.acc-filter { margin-top: 16px; height: 89px; }
.acc-head { height: 60px; display: flex; align-items: center; padding-left: 18px; font-size: 16px; color: #222; }
.acc-filter .acc-head { border-bottom: 1px solid #ddd; }
.acc-head span { flex: 1; padding-bottom: 1px; }
.acc-head-tall { height: 64px; margin: 0 -24px; }
.acc-ic { margin-right: 16px; }
.acc-ic-gen { width: 22px; height: 24px; fill: none; stroke: #111; stroke-width: 1.4; }
.acc-ic-dis { width: 24px; height: 20px; fill: none; stroke: #333; stroke-width: 1.6; }
.acc-ic-fil { width: 24px; height: 24px; fill: none; stroke: #111; stroke-width: 1.3; }
.acc-chev { width: 12px; height: 8px; fill: none; stroke: #111; stroke-width: 1.8; margin-right: 30px; }

.ifield { position: relative; width: 338px; height: 57px; margin-bottom: 29px; background: #efefef; border-bottom: 1px solid #8a8a8a; border-radius: 4px 4px 0 0; padding: 12px 12px 0; display: flex; flex-direction: column; }
.ifield small { color: #777; line-height: 15px; }
.ifield b { font-size: 16px; line-height: 18px; color: #222; }
.ifield-off { border-bottom: 1px dashed #888; }
.ifield-off b { color: #999; margin-top: 7px; }
.ifield-off .caret { border-top-color: #999; }
.ifield .caret { top: 27px; }
.itext { width: 338px; height: 48px; border-bottom: 1px solid #8a8a8a; display: flex; flex-direction: column; padding-top: 4px; }
.itext small { line-height: 14px; color: #777; }
.itext b { font-size: 16px; line-height: 20px; margin-top: 4px; color: #222; }
.toggles { margin-top: 12px; }
.toggle { height: 50px; display: flex; align-items: center; font-size: 16px; color: #6b6b6b; }
.track { position: relative; width: 38px; height: 14px; border-radius: 7px; background: #bdbdbd; margin-right: 8px; background-clip: content-box; padding-left: 8px; }
.track::after { content: ""; position: absolute; left: 0; top: -3px; width: 20px; height: 20px; border-radius: 50%; background: #fff; box-shadow: 0 2px 4px rgba(0,0,0,.35); }
.toggle-on .track { background: #7d8285; padding-left: 0; width: 37px; margin-left: 2px; margin-right: 7px; }
.toggle-on .track::after { left: 18px; background: #2c3338; }

/* rail */
.rail { width: 55px; flex: none; background: #333; display: flex; flex-direction: column; }
.rail-item { height: 56px; display: flex; align-items: center; justify-content: center; padding-left: 3px; }
.rail-on { background: #4d4d4d; }
.rail-item svg { width: 26px; height: 26px; fill: none; stroke: #fff; stroke-width: 1.6; }
.rail-item .rail-gear { width: 28px; height: 28px; stroke-width: 1.4; }

/* bottom bar */
.bottombar { height: 49px; flex: none; position: relative; z-index: 2; background: #fff; box-shadow: 0 -2px 8px rgba(0,0,0,.2); display: flex; align-items: center; justify-content: flex-end; padding-right: 34px; font-size: 13px; letter-spacing: 1.9px; color: #333; }
.act { display: flex; align-items: center; margin-right: 19px; white-space: nowrap; }
.act-ic { fill: #111; margin-right: 11px; }
.act-undo { width: 24px; height: 24px; margin-left: 20px; margin-right: 9px; }
.act-save { width: 18px; height: 18px; margin-left: 20px; margin-right: 13px; }
.publish { width: 131px; height: 36px; background: #444; color: #fff; border-radius: 4px; box-shadow: 0 1px 3px rgba(0,0,0,.4); display: flex; align-items: center; padding-left: 22px; gap: 13px; font-size: 14px; font-weight: 700; letter-spacing: 1.25px; }
.publish svg { width: 14px; height: 16px; fill: #fff; }
.kebab-g { width: 6px; height: 16px; fill: #777; margin-left: 15px; }
```
